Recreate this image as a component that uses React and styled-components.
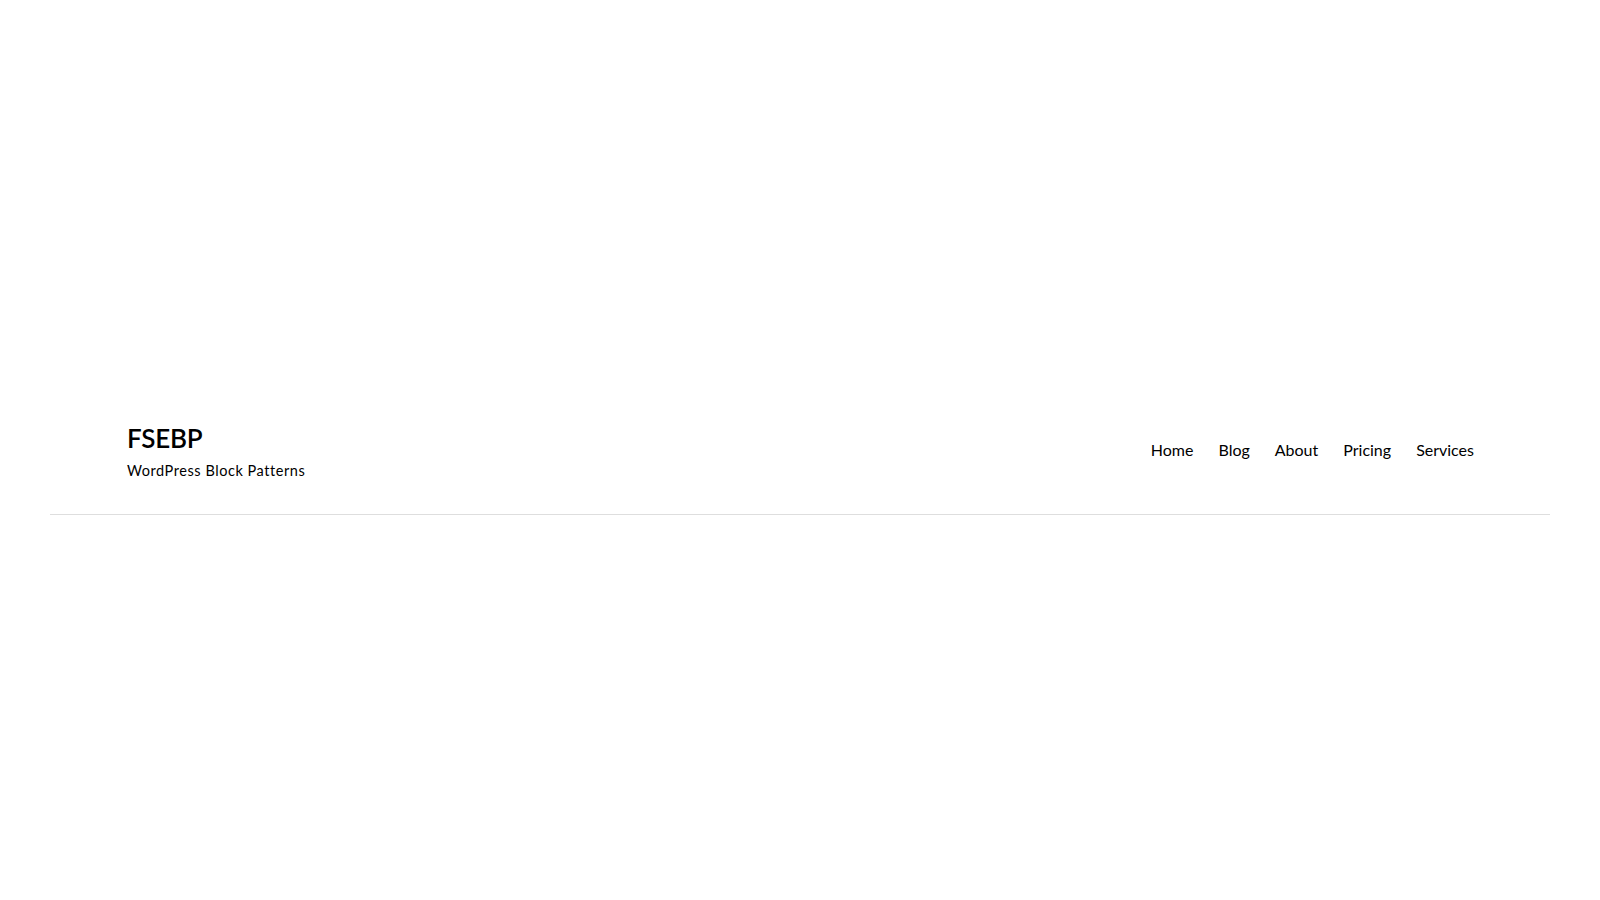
import React from "react";
import styled, { createGlobalStyle } from "styled-components";

const Global = createGlobalStyle`
  html, body { margin: 0; padding: 0; background: #ffffff; }
  body { font-family: Lato, "Noto Sans", sans-serif; color: #000; }
`;

const Page = styled.div`
  min-height: 900px;
  padding-top: 423px;
  box-sizing: border-box;
`;

const Header = styled.header`
  margin: 0 50px;
  padding: 0 76px 33px 77px;
  border-bottom: 1px solid #dedede;
  display: flex;
  align-items: center;
  justify-content: space-between;
`;

const Brand = styled.div`
  display: flex;
  flex-direction: column;
  gap: 6px;
`;

const Title = styled.h1`
  margin: 0;
  font-size: 26px;
  line-height: 31px;
  font-weight: 600;
  letter-spacing: -0.2px;
`;

const Tagline = styled.p`
  margin: 0;
  font-size: 14.5px;
  line-height: 21px;
  font-weight: 400;
  letter-spacing: 0.55px;
`;

const Nav = styled.nav`
  display: flex;
  align-items: center;
  gap: 25px;
  padding-bottom: 4px;
`;

const NavLink = styled.a`
  font-size: 16px;
  line-height: 24px;
  color: #000;
  text-decoration: none;
  font-weight: 400;
`;

const items = ["Home", "Blog", "About", "Pricing", "Services"];

export default function App() {
  return (
    <>
      <Global />
      <Page>
        <Header>
          <Brand>
            <Title>FSEBP</Title>
            <Tagline>WordPress Block Patterns</Tagline>
          </Brand>
          <Nav>
            {items.map((i) => (
              <NavLink key={i} href="#">{i}</NavLink>
            ))}
          </Nav>
        </Header>
      </Page>
    </>
  );
}
